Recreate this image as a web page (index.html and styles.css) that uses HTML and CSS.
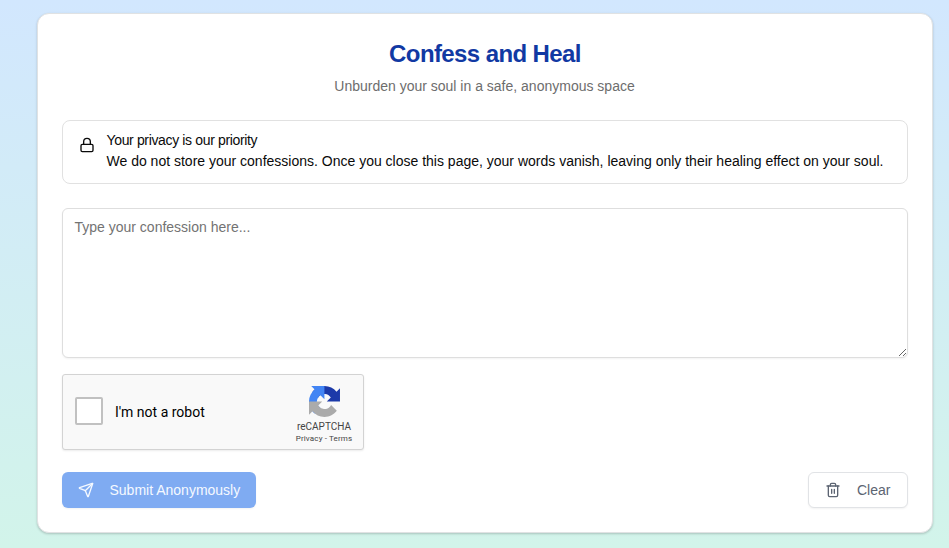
FILE: index.html
```html
<!DOCTYPE html>
<html lang="en">
<head>
    <meta charset="UTF-8">
    <meta name="viewport" content="width=device-width, initial-scale=1">
    <title>Confess and Heal</title>
    <link rel="stylesheet" href="styles.css">
</head>
<body>
    <main class="card">
        <header class="card-header">
            <h1>Confess and Heal</h1>
            <p>Unburden your soul in a safe, anonymous space</p>
        </header>

        <div class="alert" role="alert">
            <svg class="icon" viewBox="0 0 24 24">
                <rect x="3" y="11" width="18" height="11" rx="2"/>
                <path d="M7 11V7a5 5 0 0 1 10 0v4"/>
            </svg>
            <div>
                <h5>Your privacy is our priority</h5>
                <p>We do not store your confessions. Once you close this page, your words vanish, leaving only their healing effect on your soul.</p>
            </div>
        </div>

        <form id="confessionForm">
            <textarea placeholder="Type your confession here..."></textarea>

            <div class="captcha">
                <span class="captcha-box"></span>
                <span class="captcha-label">I'm not a robot</span>
                <div class="captcha-brand">
                    <svg class="captcha-logo" viewBox="0 0 64 64">
                        <path fill="#1c3aa9" d="M64 31.955l-.033-1.37V4.687l-7.16 7.16C50.948 4.674 42.033.093 32.05.093c-10.4 0-19.622 4.96-25.458 12.64l11.736 11.86a15.55 15.55 0 0 1 4.754-5.334c2.05-1.6 4.952-2.906 8.968-2.906.485 0 .86.057 1.135.163 4.976.393 9.288 3.14 11.828 7.124l-8.307 8.307L64 31.953"/>
                        <path fill="#4285f4" d="M31.862.094l-1.37.033H4.594l7.16 7.16C4.58 13.147 0 22.06 0 32.046c0 10.4 4.96 19.622 12.64 25.458L24.5 45.768a15.55 15.55 0 0 1-5.334-4.754c-1.6-2.05-2.906-4.952-2.906-8.968 0-.485.057-.86.163-1.135.393-4.976 3.14-9.288 7.124-11.828l8.307 8.307L31.86.095"/>
                        <path fill="#ababab" d="M.001 32.045l.033 1.37v25.898l7.16-7.16c5.86 7.173 14.774 11.754 24.76 11.754 10.4 0 19.622-4.96 25.458-12.64l-11.736-11.86a15.55 15.55 0 0 1-4.754 5.334c-2.05 1.6-4.952 2.906-8.968 2.906-.485 0-.86-.057-1.135-.163-4.976-.393-9.288-3.14-11.828-7.124l8.307-8.307c-10.522.04-22.4.066-27.295-.005"/>
                    </svg>
                    <span class="captcha-name">reCAPTCHA</span>
                    <span class="captcha-links">Privacy - Terms</span>
                </div>
            </div>

            <div class="actions">
                <button type="submit" class="btn btn-primary" disabled>
                    <svg class="icon" viewBox="0 0 24 24">
                        <path d="M14.536 21.686a.5.5 0 0 0 .937-.024l6.5-19a.496.496 0 0 0-.635-.635l-19 6.5a.5.5 0 0 0-.024.937l7.93 3.18a2 2 0 0 1 1.112 1.11z"/>
                        <path d="m21.854 2.147-10.94 10.939"/>
                    </svg>
                    Submit Anonymously
                </button>
                <button type="reset" class="btn btn-outline">
                    <svg class="icon" viewBox="0 0 24 24">
                        <path d="M3 6h18"/>
                        <path d="M19 6v14c0 1-1 2-2 2H7c-1 0-2-1-2-2V6"/>
                        <path d="M8 6V4c0-1 1-2 2-2h4c1 0 2 1 2 2v2"/>
                        <path d="M10 11v6M14 11v6"/>
                    </svg>
                    Clear
                </button>
            </div>
        </form>
    </main>
</body>
</html>
```
FILE: styles.css
```css
* {
    margin: 0;
    padding: 0;
    box-sizing: border-box;
}

body {
    height: 548px;
    padding: 13px 16px 0 37px;
    font-family: "Liberation Sans", Arial, sans-serif;
    font-size: 14px;
    line-height: 20px;
    color: #0a0a0a;
    background: linear-gradient(180deg, #d2e7fe, #d2f4ea);
    overflow: hidden;
}

.card {
    height: 520px;
    padding: 24px;
    background: #fff;
    border: 1px solid #e0e2e3;
    border-radius: 12px;
    box-shadow: 0 1px 3px rgba(0,0,0,0.1), 0 1px 2px rgba(0,0,0,0.1);
}

.card-header {
    text-align: center;
    margin-bottom: 24px;
}
.card-header h1 {
    font-size: 24px;
    line-height: 32px;
    color: #1139a3;
    letter-spacing: -0.6px;
    margin-bottom: 6px;
}
.card-header p {
    color: #6d6d6d;
    padding-right: 1px;
}

.icon {
    width: 16px;
    height: 16px;
    fill: none;
    stroke: currentColor;
    stroke-width: 2;
    stroke-linecap: round;
    stroke-linejoin: round;
    flex-shrink: 0;
}

.alert {
    display: flex;
    gap: 11.5px;
    height: 64px;
    padding: 12px 16px;
    border: 1px solid #e1e1e1;
    border-radius: 8px;
    margin-bottom: 24px;
    white-space: nowrap;
}
.alert .icon { margin-top: 4px; }
.alert h5 {
    font-size: 14px;
    font-weight: normal;
    line-height: 14px;
    letter-spacing: -0.35px;
    margin-bottom: 4px;
}
.alert p { line-height: 21px; }

textarea {
    display: block;
    width: 100%;
    height: 150px;
    padding: 8px 11.5px;
    font: inherit;
    color: inherit;
    background: #fff;
    border: 1px solid #dedede;
    border-radius: 6px;
    box-shadow: 0 1px 2px rgba(0,0,0,0.05);
    resize: vertical;
    margin-bottom: 16px;
}
textarea::placeholder { color: #737373; }

.captcha {
    display: flex;
    align-items: center;
    width: 302px;
    height: 76px;
    padding-left: 12px;
    font-family: Roboto, sans-serif;
    background: #f9f9f9;
    border: 1px solid #d3d3d3;
    border-radius: 3px;
    box-shadow: 0 1px 2px rgba(0,0,0,0.08);
    margin-bottom: 22px;
}
.captcha-box {
    width: 28px;
    height: 28px;
    margin-bottom: 2px;
    background: #fff;
    border: 2px solid #c1c1c1;
    border-radius: 2px;
}
.captcha-label {
    margin-left: 12px;
    color: #000;
}
.captcha-brand {
    display: flex;
    flex-direction: column;
    align-items: center;
    width: 60px;
    margin-left: auto;
    margin-right: 9px;
    padding-top: 6px;
    color: #444;
    white-space: nowrap;
}
.captcha-logo {
    width: 31px;
    height: 31px;
    margin-bottom: 4px;
}
.captcha-name {
    font-size: 10px;
    line-height: 12px;
}
.captcha-links {
    font-size: 8px;
    line-height: 12px;
    letter-spacing: 0.15px;
}

.actions {
    display: flex;
    justify-content: space-between;
}
.btn {
    display: flex;
    align-items: center;
    gap: 15.5px;
    height: 36px;
    padding: 0 16px;
    font: inherit;
    white-space: nowrap;
    border: none;
    border-radius: 6px;
    box-shadow: 0 1px 2px rgba(0,0,0,0.05);
}
.btn-primary {
    width: 194px;
    background: #7fabf2;
    color: #f5f9ff;
}
.btn-outline {
    width: 100px;
    gap: 16px;
    background: #fff;
    color: #5c6472;
    border: 1px solid #e1e3e6;
}
```
